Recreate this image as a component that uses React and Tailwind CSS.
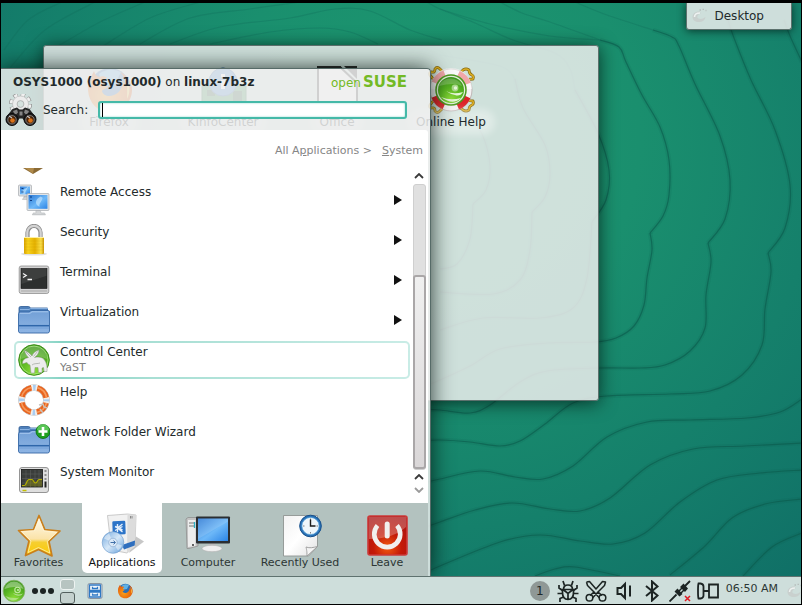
import React from "react";

/* ---------- wallpaper ---------- */

// Smooth line through a list of points (Catmull-Rom to Bezier)
function smooth(points) {
  let d = `M${points[0][0]} ${points[0][1]}`;
  for (let i = 0; i < points.length - 1; i++) {
    const a = points[i - 1] || points[i];
    const b = points[i];
    const c = points[i + 1];
    const e = points[i + 2] || c;
    d += `C${b[0] + (c[0] - a[0]) / 6} ${b[1] + (c[1] - a[1]) / 6} ${c[0] - (e[0] - b[0]) / 6} ${c[1] - (e[1] - b[1]) / 6} ${c[0]} ${c[1]}`;
  }
  return d;
}

const contours = [
  [[600, 40], [619, 47], [626, 62], [642, 95], [660, 127], [669, 160], [669, 195], [663, 216], [650, 233]],
  [[650, 233], [652, 250], [647, 278], [644, 305], [634, 326], [616, 338], [595, 342], [547, 343], [500, 349], [470, 366], [440, 380], [420, 388]],
  [[653, 30], [672, 37], [679, 46], [695, 84], [720, 136], [730, 180], [725, 219], [708, 243]],
  [[708, 243], [711, 262], [706, 295], [705, 328], [690, 351], [665, 365], [640, 368], [600, 368], [547, 371], [520, 382], [490, 405], [470, 413], [440, 410], [420, 409]],
  [[728, 20], [734, 38], [751, 80], [775, 130], [790, 185], [785, 228], [768, 253]],
  [[768, 253], [771, 272], [765, 309], [762, 345], [742, 375], [710, 391], [670, 394], [607, 396], [573, 403], [545, 424], [520, 441], [500, 446], [470, 442], [440, 440], [420, 441]],
  [[784, 20], [790, 36], [802, 62]],
  [[802, 399], [780, 412], [747, 418], [690, 420], [647, 422], [607, 437], [573, 466], [543, 479], [515, 477], [480, 471], [440, 479], [420, 484]],
  [[802, 443], [745, 446], [693, 449], [650, 465], [610, 498], [580, 511], [550, 509], [512, 503], [475, 510], [440, 522], [420, 529]],
  [[802, 470], [760, 473], [717, 480], [680, 502], [645, 533], [613, 544], [580, 541], [540, 535], [500, 542], [440, 566], [425, 573]],
  [[802, 499], [765, 504], [732, 518], [705, 546], [670, 575]],
  [[535, 576], [555, 569], [575, 567], [620, 576]],
  [[802, 533], [772, 547], [743, 576]],
  [[575, 90], [598, 133], [609, 170], [606, 200], [592, 222]],
  [[592, 222], [587, 278], [573, 308], [540, 318], [483, 318], [440, 330]],
  [[515, 79], [523, 108], [545, 145], [550, 174], [545, 197], [532, 212]],
  [[532, 212], [530, 250], [520, 280], [493, 294], [440, 292]],
  [[465, 110], [482, 134], [490, 166], [486, 190], [473, 204]],
  [[473, 204], [470, 239], [457, 264], [440, 269]],
];

const faintContours = [
  [[4, 50], [28, 20], [62, 2]],
  [[10, 68], [45, 30], [95, 2]],
  [[55, 48], [100, 22], [145, 2]],
  [[100, 48], [150, 18], [200, 2]],
  [[140, 44], [190, 18], [250, 9], [300, 2]],
  [[170, 44], [220, 27], [290, 18], [335, 9], [370, 11], [410, 30], [442, 40]],
  [[210, 44], [270, 32], [320, 28], [350, 32], [378, 44]],
  [[427, 2], [440, 9], [475, 23], [513, 40], [555, 53], [570, 69], [575, 90]],
  [[440, 9], [490, 24], [550, 36], [600, 40]],
  [[500, 2], [522, 13], [550, 22], [600, 40]],
  [[575, 2], [607, 15], [653, 30]],
  [[440, 55], [500, 66], [515, 79]],
];

function Wallpaper() {
  return (
    <svg className="absolute inset-0 h-full w-full" viewBox="1 3 800 573" preserveAspectRatio="none" aria-hidden="true">
      <defs>
        <radialGradient id="wall" gradientUnits="userSpaceOnUse" cx="430" cy="140" r="600">
          <stop offset="0" stopColor="#1d986f" />
          <stop offset=".35" stopColor="#1a8f6e" />
          <stop offset=".65" stopColor="#15806b" />
          <stop offset="1" stopColor="#0f6d66" />
        </radialGradient>
      </defs>
      <rect width="810" height="610" fill="url(#wall)" />
      <g fill="none" strokeLinejoin="round">
        {contours.map((c, i) => (
          <g key={i}>
            <path d={smooth(c)} stroke="#0b5a4c" strokeOpacity=".14" strokeWidth="4.500" />
            <path d={smooth(c)} stroke="#0b5a4c" strokeOpacity=".62" strokeWidth="1.200" />
          </g>
        ))}
        {faintContours.map((c, i) => (
          <path key={i} d={smooth(c)} stroke="#0f6a58" strokeOpacity=".3" strokeWidth="1.200" />
        ))}
      </g>
    </svg>
  );
}

/* ---------- icons ---------- */

function Svg({ box = 32, className = "", children }) {
  return (
    <svg viewBox={`0 0 ${box} ${box}`} className={`shrink-0 ${className}`} aria-hidden="true">
      {children}
    </svg>
  );
}

function SharedDefs() {
  return (
    <svg className="absolute h-0 w-0" aria-hidden="true">
      <defs>
        <linearGradient id="screen" x1="0" y1="0" x2="1" y2="1">
          <stop offset="0" stopColor="#2a78d4" />
          <stop offset=".55" stopColor="#6db8f8" />
          <stop offset="1" stopColor="#2b84e6" />
        </linearGradient>
        <linearGradient id="gold" x1="0" y1="0" x2="1" y2="0">
          <stop offset="0" stopColor="#d9a300" />
          <stop offset=".2" stopColor="#f8d21c" />
          <stop offset=".55" stopColor="#e5b100" />
          <stop offset=".85" stopColor="#fbe04a" />
          <stop offset="1" stopColor="#c99300" />
        </linearGradient>
        <linearGradient id="folder" x1="0" y1="0" x2="0" y2="1">
          <stop offset="0" stopColor="#719fd6" />
          <stop offset="1" stopColor="#8fb5e4" />
        </linearGradient>
        <linearGradient id="star" x1="0" y1="0" x2="0" y2="1">
          <stop offset="0" stopColor="#fffdf4" />
          <stop offset=".58" stopColor="#fbe3a8" />
          <stop offset=".66" stopColor="#f6cf30" />
          <stop offset="1" stopColor="#fbc900" />
        </linearGradient>
        <radialGradient id="green" cx=".5" cy=".85" r=".9">
          <stop offset="0" stopColor="#8ede3a" />
          <stop offset=".5" stopColor="#58b422" />
          <stop offset="1" stopColor="#398f1c" />
        </radialGradient>
        <linearGradient id="paper" x1="0" y1="0" x2="1" y2="1">
          <stop offset="0" stopColor="#f2f2f2" />
          <stop offset=".5" stopColor="#ffffff" />
          <stop offset="1" stopColor="#e2e2e2" />
        </linearGradient>
        <radialGradient id="power" cx=".5" cy=".8" r=".8">
          <stop offset="0" stopColor="#f25a10" />
          <stop offset=".45" stopColor="#c41a08" />
          <stop offset="1" stopColor="#a81212" />
        </radialGradient>
        <radialGradient id="fire" cx=".4" cy=".6" r=".7">
          <stop offset="0" stopColor="#f9a01b" />
          <stop offset=".7" stopColor="#e8660c" />
          <stop offset="1" stopColor="#c9430a" />
        </radialGradient>
        <linearGradient id="disc" x1="0" y1="0" x2="1" y2="1">
          <stop offset="0" stopColor="#6fa5dc" />
          <stop offset=".5" stopColor="#d6e8f8" />
          <stop offset="1" stopColor="#5f9bd8" />
        </linearGradient>
      </defs>
    </svg>
  );
}

function Monitor({ x, y, w, h }) {
  return (
    <g>
      <path d={`M${x + w * 0.4} ${y + h}h${w * 0.2}l1 ${h * 0.14}h${w * 0.15}l1 2h-${w * 0.6}l1-2h${w * 0.12}z`} fill="#d4d6d8" stroke="#9fa3a6" strokeWidth=".4" />
      <rect x={x} y={y} width={w} height={h} rx="1" fill="#e3e5e7" stroke="#9a9ea2" strokeWidth=".6" />
      <rect x={x + 1.5} y={y + 1.5} width={w - 3} height={h - 3.2} fill="url(#screen)" />
      <path d={`M${x + w * 0.62} ${y + 3}c-6 3-6 ${h * 0.5}-1 ${h * 0.6}c-1-4 3-6 3-9z`} fill="#d8f0ff" opacity=".55" />
      <path d={`M${x + 3} ${y + 3.5}h2M${x + 3} ${y + 7}h2`} stroke="#0e3c84" strokeWidth="1.2" />
    </g>
  );
}

const RemoteIcon = () => (
  <Svg className="size-8">
    <Monitor x={0.5} y={1} w={13} h={11} />
    <Monitor x={9} y={9.5} w={22} h={17} />
  </Svg>
);

const LockIcon = () => (
  <Svg className="size-8">
    <ellipse cx="16" cy="30" rx="13" ry="1.600" fill="#000" opacity=".12" />
    <path d="M9.500 14V8.500a6.500 6.500 0 0 1 13 0V14" fill="none" stroke="#8c8c8c" strokeWidth="4.200" />
    <path d="M9.300 14V8.500a6.700 6.700 0 0 1 13.400 0V14" fill="none" stroke="#d3d3d3" strokeWidth="2.200" />
    <rect x="6" y="13" width="20" height="17" rx="1" fill="url(#gold)" />
    <path d="M6 17h20M6 20h20M6 23h20M6 26h20" stroke="#b88b00" strokeOpacity=".2" strokeWidth=".8" />
    <path d="M6 13.500h20" stroke="#fff0a0" />
  </Svg>
);

const TerminalIcon = () => (
  <Svg className="size-8">
    <rect x="1.200" y="2" width="29.600" height="27.500" rx="2" fill="#d2d2d2" stroke="#8f8f8f" strokeWidth=".8" />
    <path d="M3 27h26" stroke="#a9a9a9" />
    <rect x="3" y="4.500" width="26" height="20" fill="#2d2f2e" stroke="#111" strokeWidth=".6" />
    <path d="M3.300 4.800h25.400v7L3.300 20z" fill="#fff" opacity=".08" />
    <path d="M5 9.500l3.200 2-3.200 2M9.500 15.500h4.500" fill="none" stroke="#f5f5f5" strokeWidth="1.300" />
  </Svg>
);

function FolderShape() {
  return (
    <g>
      <path d="M1 8.500V4q0-1.500 1.500-1.500h8q1.500 0 1.500 1.500l1 0h16.500v6z" fill="#4f80ba" stroke="#2c5b96" strokeWidth=".8" />
      <path d="M2 5.500h9l1.500-1H30" fill="none" stroke="#9ac0ec" strokeWidth=".8" />
      <path d="M.500 9.500q0-1.500 1.500-1.500h9l2-1.500h17.500q1 0 1 1.500V27q0 2-2 2h-27q-2 0-2-2z" fill="url(#folder)" stroke="#3568a6" strokeWidth=".9" />
      <path d="M1 21.700h30" stroke="#2e66aa" strokeWidth="1.500" />
      <path d="M1 24h30" stroke="#6c9cd6" strokeWidth=".8" />
      <path d="M2 9.300h10l2-1.500h16" stroke="#b4d2f4" strokeWidth=".8" fill="none" />
    </g>
  );
}

const FolderIcon = () => (
  <Svg className="size-8">
    <FolderShape />
  </Svg>
);

const NetFolderIcon = () => (
  <Svg className="size-8">
    <FolderShape />
    <circle cx="25" cy="7.500" r="7" fill="#1fa01f" stroke="#0d6a10" strokeWidth=".8" />
    <path d="M19 6a6 6 0 0 1 12 0q-6 3-12 0z" fill="#7fe07a" opacity=".6" />
    <path d="M25 3v9M20.500 7.500h9" stroke="#fff" strokeWidth="2.600" />
  </Svg>
);

const YastIcon = () => (
  <Svg className="size-8">
    <circle cx="16" cy="16" r="15.300" fill="url(#green)" stroke="#3f8f1d" strokeWidth="1" />
    <circle cx="16" cy="16" r="14" fill="none" stroke="#a9e87b" strokeWidth=".8" />
    <path d="M3 15a13 13 0 0 1 26 0q-12-6-26 0z" fill="#fff" opacity=".2" />
    <path d="M4.500 19c0-3 2-4.500 6-5.500-2-2-3.500-4.500-4-7 3 1 5.500 3 7.500 5.500 1-3 3.500-5 7-6 0 3-2 6-4.500 7.500 4-.8 8-.5 10 2.500 2.200 3 3 7.500 2.500 11.500h-2.800l-.7-4-1.500.5v4.500h-3.500l-.5-5h-3l-.5 5.500h-3.500l-1-8c-1.500-.3-2.500-1.500-3-2.500-2 .3-3 1.300-4.500 1z" fill="#ececec" stroke="#8d9488" strokeWidth=".5" />
    <path d="M13 13L8 8M15.500 12.500l4-5M14 21c2-2 6-1 8-2" stroke="#a8aca6" fill="none" strokeWidth=".8" />
  </Svg>
);

const HelpIcon = () => (
  <Svg className="size-8">
    <circle cx="16" cy="16" r="12.400" fill="none" stroke="#a8a8a8" strokeWidth="6.400" />
    <circle cx="16" cy="16" r="12.400" fill="none" stroke="#f2efec" strokeWidth="5.600" />
    <circle cx="16" cy="16" r="12.400" fill="none" stroke="#e8641f" strokeWidth="5.600" strokeDasharray="13.480 6" strokeDashoffset="-3" />
    <circle cx="16" cy="16" r="12.800" fill="none" stroke="#f69a5c" strokeWidth="1.600" strokeDasharray="14.110 6" strokeDashoffset="-3" />
    <circle cx="16" cy="16" r="12.400" fill="none" stroke="#a9cdf2" strokeWidth="5.400" strokeDasharray="2.500 16.980" strokeDashoffset="1.250" />
    <path d="M21 21l4-1 1 3 3 1M22 25l3 4" fill="none" stroke="#c8c4c0" strokeWidth="1.400" />
  </Svg>
);

const SysMonIcon = () => (
  <Svg className="size-8">
    <rect x="1.500" y="3.500" width="29" height="25" rx="2.500" fill="#dedede" stroke="#8a8a8a" strokeWidth=".9" />
    <rect x="3.500" y="5.500" width="21" height="17.500" fill="#3a3d3b" stroke="#161616" strokeWidth=".8" />
    <path d="M8 6v17M12.500 6v17M17 6v17M21 6v17M4 10h20M4 14.500h20M4 19h20" stroke="#626562" strokeWidth=".5" />
    <path d="M4 21.500h2.500c2 0 2-6 4.500-6h3c1.500 0 1.500 3.500 3.500 3.500s2-3.500 3.500-3.500H24V22.500H4z" fill="#8c8a10" opacity=".45" />
    <path d="M4 21.500h2.500c2 0 2-6 4.500-6h3c1.500 0 1.500 3.500 3.500 3.500s2-3.500 3.500-3.500H24" fill="none" stroke="#b4b000" strokeWidth="1.200" />
    <path d="M27.500 6v10" stroke="#8d8d8d" strokeWidth="2" strokeDasharray="2 2" />
    <path d="M27.500 17.500v6" stroke="#222" strokeWidth="2" />
    <path d="M4.500 26.500h4" stroke="#c4bf00" strokeWidth="1.500" />
  </Svg>
);

const BinocularsIcon = () => (
  <Svg className="size-8">
    <circle cx="15.500" cy="10" r="9.200" fill="none" stroke="#8f8f8f" strokeWidth="4.600" strokeDasharray="4.200 3.025" />
    <circle cx="15.500" cy="10" r="9" fill="none" stroke="#f0f0f0" strokeWidth="3.600" strokeDasharray="3.400 3.668" strokeDashoffset="-.4" />
    <circle cx="15.500" cy="10" r="8" fill="#ececec" stroke="#b5b5b5" strokeWidth=".6" />
    <circle cx="15.500" cy="10" r="3.400" fill="#d6e2df" stroke="#aaa" strokeWidth=".8" />
    <path d="M7.500 15l4.500-1.500 2.500 2h3l2.500-2 4.500 1.500 6 8v4l-8 3.500-5-6h-3l-5 6-8-3v-5z" fill="#262626" />
    <path d="M8 17l4-1.500 1 3-3 3zM24 17l-4-1.500-1 3 3 3zM14.500 17.500h3v4h-3z" fill="#858585" />
    <circle cx="7" cy="25.500" r="6" fill="#232323" stroke="#0a0a0a" />
    <circle cx="25" cy="25.500" r="6" fill="#232323" stroke="#0a0a0a" />
    <circle cx="7" cy="25.800" r="4.200" fill="#4a2408" stroke="#858585" strokeWidth=".9" />
    <circle cx="25" cy="25.800" r="4.200" fill="#4a2408" stroke="#858585" strokeWidth=".9" />
    <circle cx="7.500" cy="26.500" r="2.300" fill="#d9731a" />
    <circle cx="25.500" cy="26.500" r="2.300" fill="#d9731a" />
    <path d="M4 22l3 2M22 22l3 2" stroke="#c9c9c9" strokeWidth="1.200" />
  </Svg>
);

const StarIcon = () => (
  <Svg box={48} className="size-12">
    <path d="M24 4.500l5.800 14 15.200 1.500-11 10.500 3 14.500-13.500-6.500-13 6 3.500-14.500L3.500 19.500l15-1z" fill="url(#star)" stroke="#c97f1c" strokeWidth="1.700" strokeLinejoin="round" />
    <path d="M24 8l4.700 12 13 1.500-9.500 9 2.600 11.500-11.300-5.500-10.500 5 3-11.500-9.500-9.500 12.800-.7z" fill="none" stroke="#fff6d8" strokeWidth=".9" opacity=".7" />
  </Svg>
);

const AppsIcon = () => (
  <Svg box={48} className="size-12">
    <path d="M31 42l15-11.500-8-5z" fill="#000" opacity=".22" />
    <path d="M9.500 4.500l20-1.500 8.500 1-1 31.500-8 6.500L13.500 39z" fill="#f1f1f1" stroke="#b6b6b6" strokeWidth=".7" />
    <path d="M29.500 3l8.500 1-1 31.500-8 6.500z" fill="#dcdcdc" />
    <path d="M32.500 5v2.500M34 5v2.500" stroke="#777" strokeWidth=".8" />
    <rect x="14.500" y="10" width="13" height="13.500" rx="1.200" fill="#2c74c8" transform="rotate(-2 20 17)" />
    <path d="M19.500 13v8M24.500 13l-5 4 5 4M17 15.500l7.500 3.500M17 19.500l7.500-4" stroke="#e4effb" strokeWidth="1.400" fill="none" />
    <path d="M24 34l13-4.500-.3 5L26 38.500z" fill="#2f6fbe" />
    <circle cx="15" cy="31.500" r="10.800" fill="url(#disc)" stroke="#6d9acb" strokeWidth=".6" />
    <path d="M15 31.500L6 27.500a10 10 0 0 1 5-5zM15 31.500l9 3a10 10 0 0 1-4 5z" fill="#fff" opacity=".45" />
    <circle cx="15" cy="31.500" r="4.300" fill="#dbe9f7" stroke="#89abd0" strokeWidth=".7" />
    <path d="M12.500 31.500h4.500M15.500 29.700l2 1.800-2 1.800" stroke="#3f6fa8" fill="none" />
  </Svg>
);

const ComputerIcon = () => (
  <Svg box={48} className="size-12">
    <path d="M2 8l2-1.500h10V35l-9 2.500H3z" fill="#c3c3c3" stroke="#8a8a8a" strokeWidth=".7" />
    <path d="M4 9h7.500v26L4 36z" fill="#ececec" />
    <path d="M5 12h5.500M5 15h5.500" stroke="#777" />
    <circle cx="9" cy="34" r="1" fill="#333" />
    <path d="M10.500 11v6" stroke="#2bb0c8" strokeWidth="1.300" />
    <path d="M25 32h6l1 5h-8z" fill="#bcbcbc" />
    <ellipse cx="28" cy="37.500" rx="10" ry="3.200" fill="#efefef" stroke="#b0b0b0" strokeWidth=".6" />
    <rect x="12" y="5.500" width="34" height="27" rx="1" fill="#2b2e32" />
    <rect x="14" y="7.500" width="30" height="22.500" fill="url(#screen)" />
    <path d="M14 7.500h30v3L14 28z" fill="#fff" opacity=".14" />
  </Svg>
);

const RecentIcon = () => (
  <Svg box={48} className="size-12">
    <path d="M7.500 4.500h34v31l-9 9.500H7.500z" fill="url(#paper)" stroke="#8f9492" strokeWidth=".9" />
    <path d="M31 45c0-5-.5-7-1-9 4 1.500 7 .5 11.500-.5z" fill="#f4f4f4" stroke="#999" strokeWidth=".9" />
    <circle cx="34.500" cy="15" r="10.800" fill="#2a73b8" stroke="#174f8a" strokeWidth="1" />
    <circle cx="34.500" cy="15" r="8.600" fill="#eef6fb" stroke="#60a8dc" strokeWidth=".7" />
    <path d="M34.500 7.500v1.500M34.500 21v1.500M27 15h1.500M40.500 15H42" stroke="#666" strokeWidth=".8" />
    <path d="M34.500 8.500V15h5" stroke="#1c1c1c" strokeWidth="1.400" fill="none" />
  </Svg>
);

const LeaveIcon = () => (
  <Svg box={48} className="size-12">
    <rect x="5" y="5" width="39" height="39" rx="2" fill="url(#power)" stroke="#cc3a3a" strokeWidth="1.600" />
    <path d="M6 6h37v10Q30 28 6 28z" fill="#fff" opacity=".25" />
    <path d="M14.500 14.500a13 13 0 1 0 19.500 0" fill="none" stroke="#f1efee" strokeWidth="4.600" />
    <path d="M24.200 13v12" stroke="#f1efee" strokeWidth="5" strokeLinecap="round" />
  </Svg>
);

function Firefox({ className }) {
  return (
    <Svg box={48} className={className}>
      <circle cx="25" cy="22" r="20" fill="#2d6fb5" />
      <path d="M14 8q10-8 22-2l-6 12-12 2z" fill="#5fb2e6" />
      <path d="M3 24C2 14 7 10 9 5c1 4 3 5 5 6 3-1 6-1 8 1-3 2-4 4-4 6l5 2c-1 3-5 3-6 5 1 5 7 6 12 4 6-2 9-8 8-14 2 1 3 3 4 5 0-7-3-11-6-14 7 3 12 10 12 18 0 12-10 22-22 22S4 38 3 24z" fill="url(#fire)" />
      <path d="M40 11c5 7 6 15 2 22 0-8 1-15-2-22z" fill="#fbd24a" />
    </Svg>
  );
}

const InfoCenterIcon = () => (
  <Svg box={48} className="size-12">
    <rect x="3" y="20" width="44" height="24" fill="#2f8f4e" stroke="#1d6635" />
    <path d="M8 24h8v6H8zM34 25h9v12h-9zM8 36h12v5H8z" fill="#1c4f30" />
    <circle cx="24" cy="16" r="14" fill="#3f86cf" stroke="#2a5f9e" />
    <path d="M24 8v3M24 14v9" stroke="#fff" strokeWidth="4" />
  </Svg>
);

const OfficeIcon = () => (
  <Svg box={48} className="size-12">
    <path d="M5 1h22l17 16v31H5z" fill="#f6f6f6" stroke="#222" strokeWidth="2" />
    <path d="M4 0h24v3H4zM31 0h13v13z" fill="#2b2b2b" />
  </Svg>
);

const OnlineHelpIcon = () => (
  <Svg box={48} className="size-12">
    <g fill="none" strokeLinejoin="round" strokeLinecap="round">
      <path d="M9 14Q5 13 3 9q-1-3 2-3 3 1 3-3 2-3 5 0 2 3 5 3M39 14q4-1 7-1 1-3-1-4-3-1-3-5-3-2-6 0-2 3-6 2M9 34q-4 1-6 5-1 3 2 3 3-1 3 3 2 3 5 0 2-3 5-3M39 34q4 1 7 1 1 3-1 4-3 1-3 5-3 2-6 0-2-3-6-2" stroke="#86690f" strokeWidth="2.800" />
      <path d="M9 14Q5 13 3 9q-1-3 2-3 3 1 3-3 2-3 5 0 2 3 5 3M39 14q4-1 7-1 1-3-1-4-3-1-3-5-3-2-6 0-2 3-6 2M9 34q-4 1-6 5-1 3 2 3 3-1 3 3 2 3 5 0 2-3 5-3M39 34q4 1 7 1 1 3-1 4-3 1-3 5-3 2-6 0-2-3-6-2" stroke="#dcae22" strokeWidth="1.400" />
    </g>
    <circle cx="24" cy="24" r="21" fill="#f4f2f2" stroke="#b8aaaa" strokeWidth=".8" />
    <circle cx="24" cy="24" r="18" fill="none" stroke="#dc2428" strokeWidth="6" strokeDasharray="14 14.274" strokeDashoffset="-7.137" />
    <path d="M3 23a21 21 0 0 1 42 0z" fill="#fff" opacity=".6" />
    <circle cx="24" cy="24" r="15" fill="#e2efdb" stroke="#4d9a20" strokeWidth="1.500" />
    <circle cx="24" cy="24" r="13" fill="url(#green)" />
    <path d="M12 20a12.500 12.500 0 0 1 23 0q-8-4-23 0z" fill="#fff" opacity=".2" />
    <circle cx="28" cy="22" r="3.400" fill="#a9d88a" />
    <circle cx="28.500" cy="22" r="1.700" fill="#e6f5d9" />
    <path d="M19 25q7 4 17 1-3 5-8 3-5-1-9-4zM14 31q9 4 20 1-8 8-20-1z" fill="#e6f5d9" />
  </Svg>
);

const SuseIcon = () => (
  <Svg box={24} className="size-6">
    <circle cx="12" cy="12" r="10.800" fill="url(#green)" stroke="#86b46a" strokeWidth=".8" />
    <path d="M2.500 10a9.800 9.800 0 0 1 19 0q-8-4-19 0z" fill="#fff" opacity=".35" />
    <circle cx="15.500" cy="11" r="2.700" fill="none" stroke="#c2e8a4" strokeWidth="1.100" />
    <circle cx="16" cy="11" r=".9" fill="#d6efc2" />
    <path d="M11 14q5 2.500 10 .5-2 3-6 2-3-1-4-2.500z" fill="#b4de90" />
    <path d="M3.500 17q6 3 14 1.500-5 4.500-9 2.500-3-1-5-4z" fill="#bfe6a0" opacity=".7" />
  </Svg>
);

const CabinetIcon = () => (
  <Svg box={16} className="size-4">
    <rect x="1" y=".5" width="14" height="15" rx="1.500" fill="#e8eef4" stroke="#8793a0" />
    <path d="M2.500 2h11v5.500h-11zM2.500 9h11v5h-11z" fill="#f4f8fc" stroke="#2f78c4" strokeWidth="1.300" />
    <path d="M5.500 3.800v1.700h5V3.800M5.500 10.500v1.500h5v-1.500" fill="none" stroke="#2f78c4" strokeWidth="1.300" />
  </Svg>
);

function Cashew({ className }) {
  return (
    <Svg box={16} className={className}>
      <path d="M9 3.500C4.500 3 1.500 5.500 1.500 9s3.500 5.500 7.500 5c3-.5 5-2 5.500-5-2.500 2-5 2.500-7 1.500S6 7 9.500 5.500z" fill="#c9d0ce" />
      <path d="M9 5C5.500 5 3.500 6.500 3.500 9" fill="none" stroke="#eef2f1" strokeWidth="1.500" />
      <path d="M8.500 2H10M11.500 1.300H13M14.500 2.500h1" stroke="#b7bfbd" strokeWidth="1.300" />
    </Svg>
  );
}

const trayIcons = [
  {
    label: "Bug reports",
    art: (
      <g strokeWidth="1.700">
        <path d="M5.500 9.500h11v3q0 7-5.500 7t-5.500-7zM6.500 9.500q0-4.500 4.500-4.500t4.500 4.500M11 13.500v6M6 9.500l5 4 5-4" />
        <path d="M7.500 5.500L6 1M14.500 5.500L16 1M5.500 10.500L2 8V5M16.500 10.500L20 8V5M5.500 13.500H.500M16.500 13.500h5M6.500 17L3 18.500V22M15.500 17l3.500 1.500V22" />
      </g>
    ),
  },
  {
    label: "Clipboard",
    art: (
      <g strokeWidth="1.500" strokeLinejoin="round">
        <path d="M1.500 2l3-.5L11 9l6.500-7.500 3 .5-1 3.500L13 12l4 3.500M1.500 2l1 3.500L9 12l-4 3.500M9 12l5.500 6M13 12l-5.500 6" />
        <circle cx="4.500" cy="17.800" r="3.300" />
        <circle cx="17.500" cy="17.800" r="3.300" />
      </g>
    ),
  },
  { label: "Volume", art: <path d="M4.500 8H8l4-4v14l-4-4H4.500zM17 5.500v11" /> },
  { label: "Bluetooth", art: <path d="M5 6l11.500 9.500-5.500 5V1.500l5.500 5L5 16" /> },
  {
    label: "Network",
    art: (
      <g>
        <path d="M.500 21.500l7-7M15 7l6-6" strokeWidth="1.800" />
        <path d="M5.500 11.500l5 5 3-2.500-5-5.500zM11 7l5 5 3-3.500-4.500-5z" fill="#1c2423" stroke="none" />
        <path d="M9 12l5-5M11 14l5-5" strokeWidth="1.500" />
        <path d="M16 16l5 5M21 16l-5 5" stroke="#e01b24" strokeWidth="1.500" />
      </g>
    ),
  },
  { label: "Devices", art: <path d="M1.500 3.500h2q3 .5 3 3v9q0 2.500-3 3h-2q-.500-1.500-.500-7.500t.500-7.500zM6.500 11H12M12 4.500h9v13h-9z" strokeWidth="1.800" /> },
];

/* ---------- folder view ---------- */

const desktopLinks = [
  { name: "Firefox", icon: <Firefox className="size-12" /> },
  { name: "KInfoCenter", icon: <InfoCenterIcon /> },
  { name: "Office", icon: <OfficeIcon /> },
  { name: "Online Help", icon: <OnlineHelpIcon /> },
];

function FolderView() {
  return (
    <section
      aria-label="Desktop folder"
      className="absolute top-[42px] left-[42px] h-[356px] w-[556px] rounded-[3px] border border-[#5d716d] bg-[#efeeee]/85 px-2 pt-5 shadow-[0_2px_18px_rgba(0,20,15,0.75)]"
    >
      <ul className="flex">
        {desktopLinks.map((l) => (
          <li key={l.name} className="w-[114px]">
            <a href="#" className="flex flex-col items-center">
              {l.icon}
              <span className="rounded-full bg-white/35 px-1 leading-4 shadow-[0_0_7px_5px_rgba(255,255,255,0.35)]">{l.name}</span>
            </a>
          </li>
        ))}
      </ul>
    </section>
  );
}

/* ---------- launcher ---------- */

const entries = [
  { name: "Remote Access", icon: <RemoteIcon />, sub: true },
  { name: "Security", icon: <LockIcon />, sub: true },
  { name: "Terminal", icon: <TerminalIcon />, sub: true },
  { name: "Virtualization", icon: <FolderIcon />, sub: true },
  { name: "Control Center", icon: <YastIcon />, note: "YaST", selected: true },
  { name: "Help", icon: <HelpIcon /> },
  { name: "Network Folder Wizard", icon: <NetFolderIcon /> },
  { name: "System Monitor", icon: <SysMonIcon /> },
];

function Entry({ name, icon, sub, note, selected }) {
  return (
    <li className="h-10 py-px">
      <button
        className={`flex h-[38px] w-full items-center rounded-[5px] border-2 border-transparent pr-1.5 pl-0.5 text-left ${
          selected
            ? "bg-[linear-gradient(white,white),linear-gradient(90deg,#c4eae2,#86d3c4_12%,#a8dfd4_35%,#c9ece6)] [background-clip:padding-box,border-box] [background-origin:padding-box,border-box]"
            : ""
        }`}
      >
        {icon}
        <span className="ml-2.5 flex-1 self-start pt-px">
          <span className="block leading-4">{name}</span>
          {note && <span className="block text-[11px] leading-[15px] text-[#7d7d7d]">{note}</span>}
        </span>
        {sub && (
          <svg viewBox="0 0 8 10" className="h-2.5 w-2" aria-hidden="true">
            <path d="M0 0l8 5-8 5z" fill="#111" />
          </svg>
        )}
      </button>
    </li>
  );
}

function Chevron({ down, dim }) {
  return (
    <svg viewBox="0 0 10 6" className="h-1.5 w-2.5" aria-hidden="true">
      <path d={down ? "M1 1l4 4 4-4" : "M1 5l4-4 4 4"} fill="none" stroke={dim ? "#9a9a9a" : "#3a3a3a"} strokeWidth="1.800" />
    </svg>
  );
}

function Scrollbar() {
  return (
    <div className="flex w-[14px] flex-col items-center pt-[5px]">
      <button aria-label="Scroll up" className="mb-[5px] h-1.5">
        <Chevron />
      </button>
      <div className="flex w-[13px] flex-1 flex-col rounded-[3px] border border-[#cfcfcf] bg-[#e0e0e0]">
        <div className="h-[90px]" />
        <div className="-mx-px flex-1 rounded-[3px] border-2 border-[#aaa7a8] bg-gradient-to-b from-[#f0f0f0] to-[#dad7d8]" />
      </div>
      <button aria-label="Page up" className="mt-1 mb-[7px] h-1.5">
        <Chevron />
      </button>
      <button aria-label="Scroll down" className="mb-2.5 h-1.5">
        <Chevron down dim />
      </button>
    </div>
  );
}

const tabs = [
  { name: "Favorites", icon: <StarIcon />, extra: "mr-1.5" },
  { name: "Applications", icon: <AppsIcon />, active: true },
  { name: "Computer", icon: <ComputerIcon /> },
  { name: "Recently Used", icon: <RecentIcon /> },
  { name: "Leave", icon: <LeaveIcon /> },
];

function Launcher() {
  return (
    <section
      aria-label="Application launcher"
      className="absolute bottom-0 left-0 flex w-[430px] flex-col rounded-tr-[4px] border-t border-r border-[#566b68] bg-[#efeeee]/85 pr-0.5 shadow-[0_0_22px_rgba(0,15,10,0.8)]"
    >
      <header className="h-[61px] pt-1">
        <div className="flex h-[18px] items-center justify-between pr-[21px] pl-3">
          <h1 className="leading-4">
            <b>OSYS1000 (osys1000)</b> on <b>linux-7b3z</b>
          </h1>
          <span className="flex items-baseline gap-0.5 leading-4 text-[#73ba25]">
            open<b className="text-[15px]">SUSE</b>
          </span>
        </div>
        <div className="flex h-9 items-center pt-0.5 pr-[21px] pl-1">
          <BinocularsIcon />
          <label htmlFor="search" className="ml-1.5 w-[55px]">
            Search:
          </label>
          <div className="flex h-[18px] flex-1 items-center rounded-[3px] border-2 border-[#45b9a8] bg-white pl-0.5 shadow-[inset_0_0_2px_#7fd2c5]">
            <span className="h-3.5 w-px bg-black" />
            <input id="search" type="text" className="h-3.5 min-w-0 flex-1 bg-transparent outline-none" />
          </div>
        </div>
      </header>

      <div className="flex flex-col rounded-tr-[3px] bg-white">
        <nav aria-label="Breadcrumb" className="flex h-[38px] items-center justify-end gap-2.5 pt-1 pr-[5px] text-[11px] text-[#868686]">
          <a href="#">
            All A<u>p</u>plications &gt;
          </a>
          <a href="#">
            <u>S</u>ystem
          </a>
        </nav>
        <div className="flex h-[335px] pr-0.5">
          <ul className="ml-[13px] flex-1">
            <li className="h-3">
              <svg viewBox="0 0 20 6" className="ml-[9px] h-1.5 w-5" aria-hidden="true">
                <path d="M0 0h20L10 6z" fill="#8a6a34" />
                <path d="M2 0h9l-1 5.500z" fill="#b08a4a" />
              </svg>
            </li>
            {entries.map((e) => (
              <Entry key={e.name} {...e} />
            ))}
          </ul>
          <div className="ml-0.5 flex">
            <Scrollbar />
          </div>
        </div>
      </div>

      <div role="tablist" className="grid h-[73px] grid-cols-[81px_80px_92px_92px_1fr] bg-[#b3c2bf]">
        {tabs.map((t) => (
          <button
            key={t.name}
            role="tab"
            aria-selected={!!t.active}
            className={`flex h-[70px] flex-col items-center pt-2 text-[11px] leading-4 whitespace-nowrap ${
              t.active ? "rounded-b-[5px] bg-white text-[#111]" : "text-[#2c3634]"
            } ${t.extra || ""}`}
          >
            {t.icon}
            <span className="-mt-1">{t.name}</span>
          </button>
        ))}
      </div>
    </section>
  );
}

/* ---------- panel ---------- */

function Panel() {
  return (
    <footer className="relative h-7 overflow-hidden bg-[#167f6c]">
      <div className="flex h-7 items-center border-t border-[#5f726f] bg-[#efeeee]/85 pl-px">
        <button aria-label="Application launcher menu">
          <SuseIcon />
        </button>
        <button aria-label="Activities" className="ml-1.5 flex gap-0.5">
          <span className="size-[6px] rounded-full bg-[#1c2423]" />
          <span className="size-[6px] rounded-full bg-[#1c2423]" />
          <span className="size-[6px] rounded-full bg-[#1c2423]" />
        </button>
        <div className="ml-1.5 flex w-[15px] flex-col gap-[2px] self-end">
          <button aria-label="Desktop 1" className="h-[11px] rounded-[3px] border border-[#eef3f2] bg-[#b7c4c1]" />
          <button aria-label="Desktop 2" className="h-3 rounded-[3px] border border-[#53605e] bg-[#c4d1ce]" />
        </div>
        <button aria-label="File manager" className="ml-3">
          <CabinetIcon />
        </button>
        <button aria-label="Firefox" className="ml-3.5">
          <Firefox className="size-4" />
        </button>
        <div className="ml-auto flex items-center gap-1.5">
          <button aria-label="Notifications" className="mr-px size-5 rounded-full bg-[#8f9896] leading-5 text-[#20282a]">
            1
          </button>
          {trayIcons.map((t) => (
            <button key={t.label} aria-label={t.label}>
              <svg viewBox="0 0 22 22" className="size-[22px]" fill="none" stroke="#1c2423" strokeWidth="2" aria-hidden="true">
                {t.art}
              </svg>
            </button>
          ))}
          <time className="mr-0.5 mb-0.5 ml-px text-[11px] text-[#2c3634]">06:50 AM</time>
          <button aria-label="Panel settings" className="-mr-px">
            <Cashew className="size-4" />
          </button>
        </div>
      </div>
    </footer>
  );
}

export default function App() {
  return (
    <div className="flex h-screen w-full flex-col overflow-hidden bg-black pt-[3px] pr-px pb-px pl-px font-['DejaVu_Sans',sans-serif] text-[12px] text-[#222a2b]">
      <SharedDefs />
      <main className="relative min-h-0 flex-1 overflow-hidden">
        <Wallpaper />
        <FolderView />
        <button className="absolute top-0 right-[9px] flex h-[27px] items-center gap-2 rounded-b-[3px] border border-t-0 border-[#5d716d] bg-[#efeeee]/85 pr-[27px] pl-1 text-[12px] shadow-[0_1px_8px_rgba(0,20,15,0.7)]">
          <Cashew className="size-4" />
          Desktop
        </button>
        <Launcher />
      </main>
      <Panel />
    </div>
  );
}
